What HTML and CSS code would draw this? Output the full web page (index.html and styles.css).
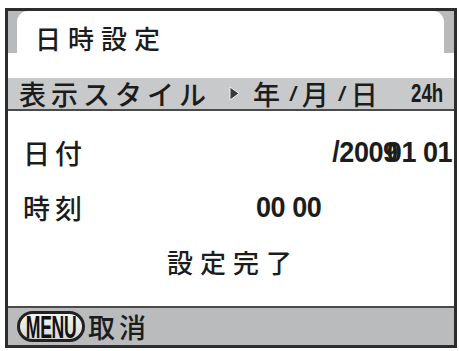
FILE: index.html
```html
<!DOCTYPE html>
<html lang="ja">
<head>
<meta charset="utf-8">
<link rel="stylesheet" href="styles.css">
</head>
<body>
<div class="screen">
  <div class="title">
    <div class="title-inner"><span class="title-text">日時設定</span></div>
  </div>
  <div class="style-row">
    <span class="style-label">表示スタイル</span>
    <svg class="tri" width="11" height="15" viewBox="0 0 11 15"><polygon points="1,1 10,7.5 1,14" fill="#3a3a3a" stroke="#f0f0f0" stroke-width="1"/></svg>
    <span class="ymd">年<span class="sl">/</span>月<span class="sl">/</span>日</span>
    <span class="h24">24h</span>
  </div>
  <div class="content">
    <div class="row">
      <span class="label">日付</span>
      <span class="val-cell val-date"><span class="val val-r">/2009<span class="ov">01 01</span></span></span>
    </div>
    <div class="row">
      <span class="label">時刻</span>
      <span class="val-cell"><span class="val val-l">00 00</span></span>
    </div>
    <div class="done">設定完了</div>
  </div>
  <div class="footer">
    <span class="menu"><span class="menu-t">MENU</span></span>
    <span class="cancel">取消</span>
  </div>
</div>
</body>
</html>
```

FILE: styles.css
```css
html, body {
  margin: 0;
  padding: 0;
  background: #ffffff;
}
body {
  width: 459px;
  height: 351px;
  overflow: hidden;
  font-family: "Noto Sans CJK JP", "Liberation Sans", sans-serif;
  font-weight: 500;
  color: #1c1c1c;
}
.screen {
  margin: 8px 0 0 5px;
  width: 446px;
  height: 334px;
  border: 3px solid #2c2c2c;
  display: flex;
  flex-direction: column;
  background: #fff;
}
.title {
  height: 67px;
  padding: 0 10px 0 9px;
  background: linear-gradient(#b9babc, #b9babc) left top / 100% 42px no-repeat, #ffffff;
  display: flex;
  box-sizing: border-box;
}
.title-inner {
  flex: 1;
  background: #ffffff;
  border-top-left-radius: 11px;
  border-top-right-radius: 11px;
  padding: 14px 0 0 18px;
}
.title-text {
  font-size: 26px;
  line-height: 26px;
  letter-spacing: 7px;
  display: block;
}
.style-row {
  height: 31px;
  background: #c8c9cb;
  border-bottom: 2px solid #4a4a4a;
  display: flex;
  align-items: center;
  padding-left: 11px;
  white-space: nowrap;
}
.style-row > * {
  flex-shrink: 0;
}
.style-label {
  font-size: 27px;
  line-height: 31px;
  letter-spacing: 5px;
}
.tri {
  margin-left: 18px;
  display: block;
}
.ymd {
  margin-left: 13px;
  font-size: 27px;
  line-height: 31px;
  display: flex;
  align-items: center;
}
.sl {
  font-family: "Liberation Sans", sans-serif;
  font-weight: bold;
  font-style: italic;
  font-size: 21px;
  margin: 0 6px 0 10px;
}
.h24 {
  margin-left: 33px;
  width: 32px;
  font-family: "Liberation Sans", sans-serif;
  font-weight: bold;
  font-size: 26px;
  line-height: 31px;
  display: inline-block;
  transform: scaleX(0.72);
  transform-origin: left center;
}
.content {
  border-bottom: 2px solid #4a4a4a;
  padding: 27px 0 0 0;
  box-sizing: border-box;
  height: 197px;
  display: flex;
  flex-direction: column;
  gap: 27px;
}
.row {
  display: grid;
  grid-template-columns: 233px 1fr;
  padding-left: 15px;
  height: 28px;
  align-items: center;
}
.label {
  font-size: 27px;
  line-height: 28px;
  letter-spacing: 5px;
  white-space: nowrap;
}
.val-cell {
  display: block;
}
.val-date {
  text-align: right;
  padding-right: 2px;
}
.val {
  display: inline-block;
  font-family: "Liberation Sans", sans-serif;
  font-weight: bold;
  font-size: 30px;
  line-height: 28px;
  letter-spacing: -0.5px;
  transform: scaleX(0.9);
  white-space: nowrap;
}
.val-r {
  transform-origin: right center;
}
.val-l {
  transform-origin: left center;
}
.ov {
  margin-left: -12px;
}
.done {
  text-align: center;
  font-size: 26px;
  line-height: 28px;
  letter-spacing: 7px;
  padding-left: 4px;
}
.footer {
  flex: 1;
  background: #b9bbbd;
  display: flex;
  align-items: center;
  padding-left: 9px;
}
.menu {
  width: 68px;
  height: 31px;
  box-sizing: border-box;
  border: 3px solid #222;
  border-radius: 16px;
  background: linear-gradient(#f4f4f4, #d8d8d8);
  display: flex;
  align-items: center;
  justify-content: center;
}
.menu-t {
  font-family: "Liberation Sans", sans-serif;
  font-weight: bold;
  font-size: 32px;
  line-height: 30px;
  display: inline-block;
  transform: scaleX(0.55);
  color: #111;
  letter-spacing: -0.5px;
}
.cancel {
  margin-left: 3px;
  font-size: 27px;
  line-height: 30px;
  letter-spacing: 4px;
}
```
